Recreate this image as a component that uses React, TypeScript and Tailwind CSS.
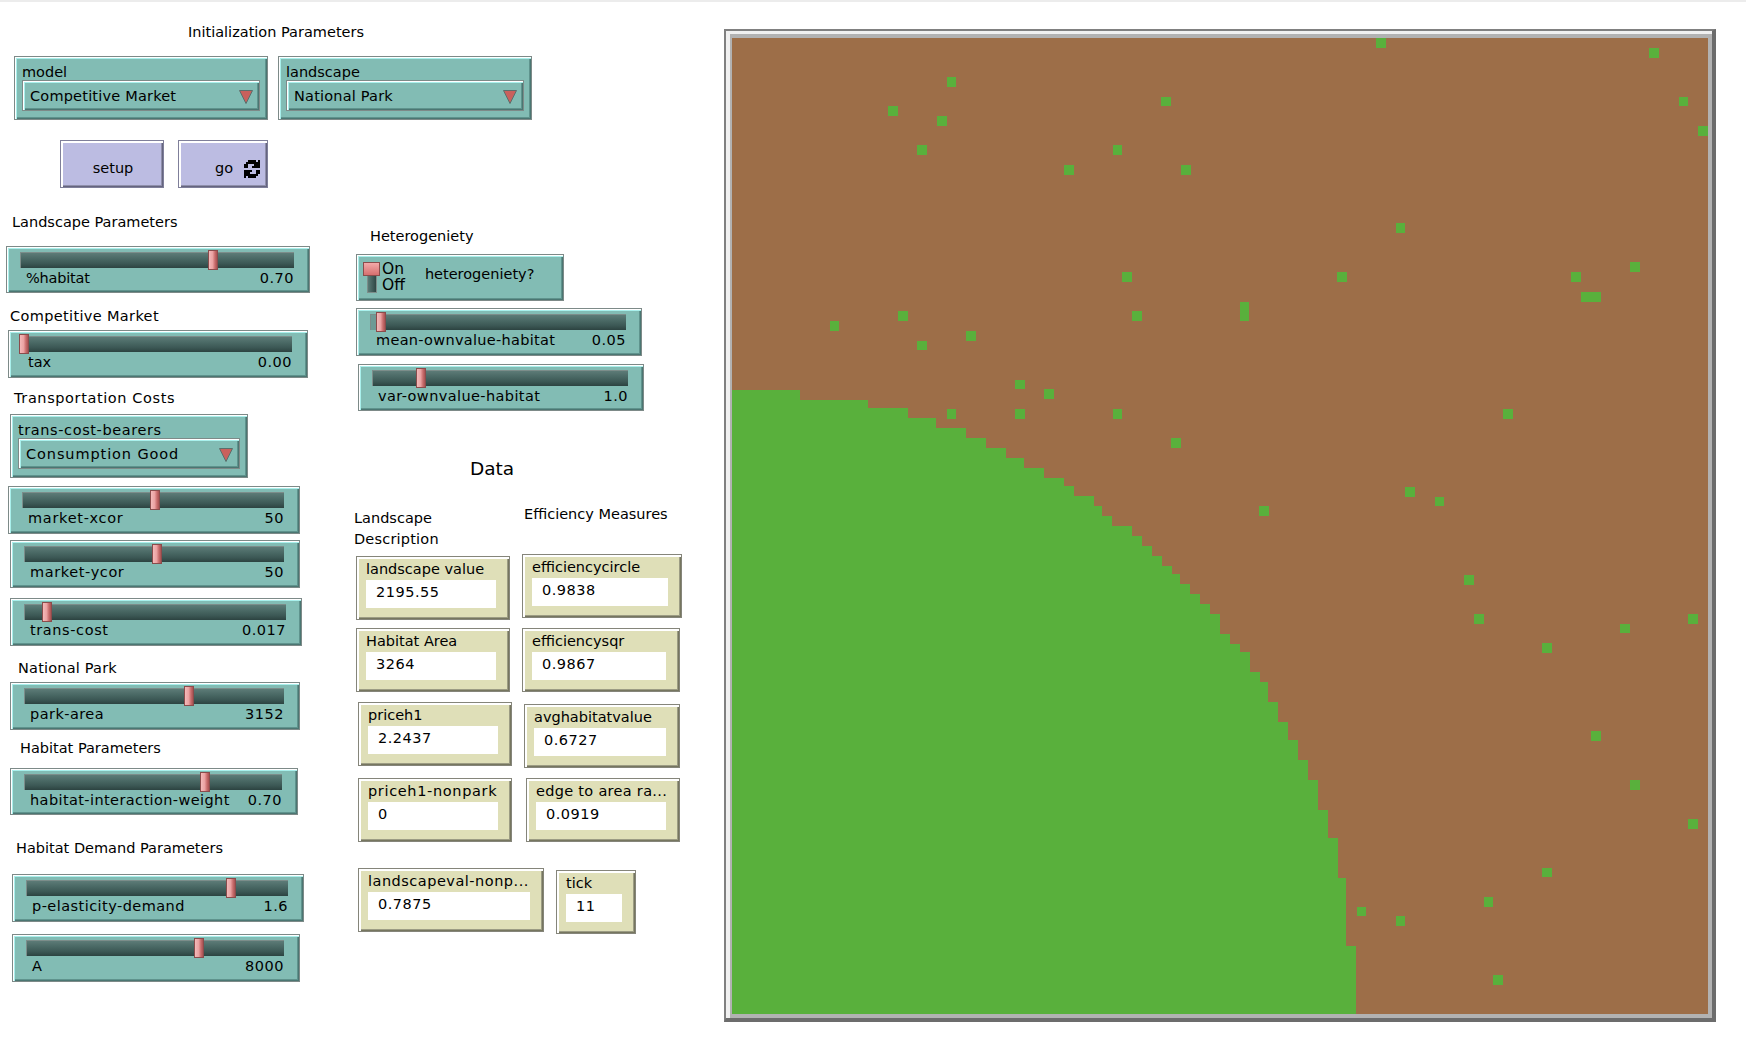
import React from "react";

const steps: [number, number][] = [
  [800,400],[868,408],[908,418],[936,428],[966,438],[986,448],[1006,458],[1024,468],[1044,478],[1064,486],
  [1074,496],[1094,506],[1102,516],[1112,526],[1132,536],[1142,546],[1152,556],[1162,566],[1172,574],[1180,584],
  [1190,594],[1200,604],[1210,614],[1220,634],[1230,644],[1240,652],[1250,672],[1260,682],[1268,702],[1278,722],
  [1288,740],[1298,760],[1308,780],[1318,810],[1328,838],[1338,878],[1346,946],[1356,1014],
];

const dots: [number, number, number?, number?][] = [
  [66,0],[94,1],[22,4],[44,6],[97,6],[16,7],[21,8],[99,9],[19,11],[39,11],[34,13],[46,13],[68,19],[40,24],[62,24],
  [86,24],[92,23],[87,26,2,1],[52,27,1,2],[17,28],[41,28],[10,29],[24,30],[19,31],[29,35],[32,36],[22,38],[29,38],
  [39,38],[79,38],[45,41],[54,48],[69,46],[72,47],[75,55],[76,59],[83,62],[91,60],[98,59],[88,71],[92,76],[98,80],
  [83,85],[77,88],[64,89],[68,90],[78,96],
];

function greenPoints() {
  const pts: string[] = ["732,390"];
  steps.forEach(([x, y]) => {
    pts.push(`${x},${pts[pts.length - 1].split(",")[1]}`);
    pts.push(`${x},${y}`);
  });
  pts.push("732,1014");
  return pts.join(" ");
}

function px(v: number) {
  return Math.round(v * 9.76);
}

function World() {
  return (
    <div className="absolute left-[724px] top-[29px] box-border w-[992px] h-[993px] border-t-2 border-l-2 border-r-4 border-b-4 border-t-[#808080] border-l-[#808080] border-r-[#6c6c6c] border-b-[#6c6c6c] bg-[#b2b2b2] pt-[7px] pl-[6px] pr-[4px] pb-[4px] shadow-[inset_4px_3px_0_#f0f0f0]">
      <svg width="976" height="976" viewBox="732 38 976 976" shapeRendering="crispEdges" className="block">
        <rect x="732" y="38" width="976" height="976" fill="#9d6e48" />
        <polygon points={greenPoints()} fill="#59b03c" />
        {dots.map(([c, r, w = 1, h = 1], i) => (
          <rect
            key={i}
            x={732 + px(c)}
            y={38 + px(r)}
            width={px(c + w) - px(c)}
            height={px(r + h) - px(r)}
            fill="#59b03c"
          />
        ))}
      </svg>
    </div>
  );
}

const tealBevel =
  "border border-[#7d8a88] bg-[#82bcb4] shadow-[inset_1px_1px_0_#ffffff,inset_2px_2px_0_#a9f0ec,inset_-1px_-1px_0_#4b7672,inset_-2px_-2px_0_#5f938d]";

function Slider({
  pos,
  handle,
  label,
  value,
  filled,
  track = "",
}: {
  pos: string;
  handle: string;
  label: string;
  value: string;
  filled?: string;
  track?: string;
}) {
  return (
    <div className={`absolute box-border pl-[13px] pr-[15px] pt-[5px] text-[14.5px] ${tealBevel} ${pos}`}>
      <div className="relative h-[16px] border-l border-t border-[#7c8d8a] bg-[linear-gradient(#5d7b77_0,#4b6a66_35%,#3c5855_70%,#2c4341_100%)]">
        {filled ? <div className={`absolute left-0 top-0 h-full bg-[#6f9a95] ${filled}`} /> : null}
        <div
          className={`absolute -top-[3px] box-border w-[10px] h-[20px] border border-[#8a4c4c] bg-[linear-gradient(90deg,#f3b9b9_0,#eba2a2_45%,#c76b6b_75%,#a85252_100%)] ${handle}`}
        />
      </div>
      <div className="box-border flex h-[19px] items-center justify-between pl-[6px] pt-[2px] leading-[17px]">
        <span className={track}>{label}</span>
        <span className="tracking-[0.5px]">{value}</span>
      </div>
    </div>
  );
}

function Chooser({
  pos,
  label,
  value,
  track = "",
  labelTrack = "",
}: {
  pos: string;
  label: string;
  value: string;
  track?: string;
  labelTrack?: string;
}) {
  return (
    <div className={`absolute box-border pl-[7px] pr-[7px] pt-[3px] text-[14.5px] ${tealBevel} ${pos}`}>
      <div className={`h-[20px] leading-[24px] ${labelTrack}`}>{label}</div>
      <div className="box-border flex h-[31px] items-center justify-between border border-[#7d8a88] pl-[7px] pr-[6px] pt-[2px] shadow-[inset_1px_1px_0_#ffffff,inset_2px_2px_0_#a9f0ec,inset_-1px_-1px_0_#4b7672,inset_-2px_-2px_0_#5f938d]">
        <span className={track}>{value}</span>
        <svg width="14" height="14" viewBox="0 0 14 14">
          <polygon points="0.5,0.5 13.5,0.5 7,13.5" fill="#c9605c" stroke="#5a6f6c" strokeWidth="1" />
        </svg>
      </div>
    </div>
  );
}

function ForeverIcon() {
  const rows = ["..####.#", ".#######", "##...###", "##..####", "........", "####..##", "###...##", "#######.", "#.####.."];
  return (
    <svg width="16" height="18" viewBox="0 0 8 9" shapeRendering="crispEdges" className="block">
      {rows.flatMap((row, y) =>
        row.split("").map((c, x) => (c === "#" ? <rect key={`${x}-${y}`} x={x} y={y} width="1" height="1" fill="#000" /> : null))
      )}
    </svg>
  );
}

const purpleBevel =
  "border border-[#7f7f9a] bg-[#bcbce2] shadow-[inset_2px_2px_0_#ffffff,inset_-1px_-1px_0_#65657f,inset_-2px_-2px_0_#8f8fab]";

function Monitor({ pos, label, value, track = "" }: { pos: string; label: string; value: string; track?: string }) {
  return (
    <div
      className={`absolute box-border pl-[9px] pr-[13px] pt-[2px] text-[14.5px] border border-[#85857a] bg-[#dfdfb8] shadow-[inset_2px_2px_0_#ffffff,inset_-1px_-1px_0_#76765f,inset_-2px_-2px_0_#9c9c84] ${pos}`}
    >
      <div className={`h-[20px] leading-[20px] whitespace-nowrap ${track}`}>{label}</div>
      <div className="mt-[1px] h-[28px] bg-white pl-[10px] leading-[24px] tracking-[0.5px]">{value}</div>
    </div>
  );
}

function Note({ pos, children }: { pos: string; children: React.ReactNode }) {
  return <div className={`absolute h-[20px] leading-[20px] text-[14.5px] whitespace-nowrap ${pos}`}>{children}</div>;
}

export default function App() {
  return (
    <div className="relative h-[1048px] w-[1746px] overflow-hidden bg-white font-['DejaVu_Sans',sans-serif] text-black">
      <div className="h-[2px] bg-[#ececec]" />

      <Note pos="left-[188px] top-[22px]">Initialization Parameters</Note>
      <Chooser pos="left-[14px] top-[56px] w-[254px] h-[64px]" label="model" value="Competitive Market" track="tracking-[0.2px]" />
      <Chooser pos="left-[278px] top-[56px] w-[254px] h-[64px]" label="landscape" value="National Park" track="tracking-[0.2px]" />

      <div className={`absolute left-[60px] top-[140px] box-border flex h-[48px] w-[104px] items-center justify-center pt-[9px] pl-[2px] text-[14.5px] ${purpleBevel}`}>
        setup
      </div>
      <div className={`absolute left-[178px] top-[140px] box-border flex h-[48px] w-[90px] items-center justify-end gap-[11px] pt-[9px] pr-[7px] text-[14.5px] ${purpleBevel}`}>
        <span>go</span>
        <ForeverIcon />
      </div>

      <Note pos="left-[12px] top-[212px]">Landscape Parameters</Note>
      <Slider pos="left-[6px] top-[246px] w-[304px] h-[47px]" handle="left-[187px]" label="%habitat" value="0.70" track="tracking-[-0.2px]" />

      <Note pos="left-[10px] top-[306px] tracking-[0.35px]">Competitive Market</Note>
      <Slider pos="left-[8px] top-[330px] w-[300px] h-[48px]" handle="left-[-4px]" label="tax" value="0.00" />

      <Note pos="left-[14px] top-[388px] tracking-[0.6px]">Transportation Costs</Note>
      <Chooser pos="left-[10px] top-[414px] w-[238px] h-[64px]" label="trans-cost-bearers" value="Consumption Good" track="tracking-[0.9px]" labelTrack="tracking-[0.6px]" />
      <Slider pos="left-[8px] top-[486px] w-[292px] h-[48px]" handle="left-[127px]" label="market-xcor" value="50" track="tracking-[0.7px]" />
      <Slider pos="left-[10px] top-[540px] w-[290px] h-[48px]" handle="left-[127px]" label="market-ycor" value="50" track="tracking-[0.6px]" />
      <Slider pos="left-[10px] top-[598px] w-[292px] h-[48px]" handle="left-[17px]" label="trans-cost" value="0.017" track="tracking-[0.6px]" />

      <Note pos="left-[18px] top-[658px] tracking-[0.2px]">National Park</Note>
      <Slider pos="left-[10px] top-[682px] w-[290px] h-[48px]" handle="left-[159px]" label="park-area" value="3152" track="tracking-[0.45px]" />

      <Note pos="left-[20px] top-[738px]">Habitat Parameters</Note>
      <Slider pos="left-[10px] top-[768px] w-[288px] h-[47px]" handle="left-[175px]" label="habitat-interaction-weight" value="0.70" track="tracking-[0.4px]" />

      <Note pos="left-[16px] top-[838px]">Habitat Demand Parameters</Note>
      <Slider pos="left-[12px] top-[874px] w-[292px] h-[48px]" handle="left-[199px]" label="p-elasticity-demand" value="1.6" track="tracking-[0.45px]" />
      <Slider pos="left-[12px] top-[934px] w-[288px] h-[48px]" handle="left-[167px]" label="A" value="8000" />

      <Note pos="left-[370px] top-[226px]">Heterogeniety</Note>
      <div className={`absolute left-[356px] top-[254px] box-border flex h-[47px] w-[208px] text-[14.5px] ${tealBevel}`}>
        <div className="relative ml-[6px] mt-[7px] w-[18px]">
          <div className="absolute left-[4px] top-[12px] h-[19px] w-[10px] border border-[#7c8d8a] bg-[linear-gradient(90deg,#5b7a76,#2f4745)]" />
          <div className="absolute left-0 top-0 h-[14px] w-[17px] border border-[#8a4c4c] bg-[linear-gradient(#f3a9a9,#d66f6f)]" />
        </div>
        <div className="ml-[1px] mt-[6px] text-[15.5px] leading-[16px]">
          <div>On</div>
          <div>Off</div>
        </div>
        <div className="ml-[20px] mt-[9px] leading-[20px]">heterogeniety?</div>
      </div>
      <Slider pos="left-[356px] top-[308px] w-[286px] h-[48px]" handle="left-[5px]" label="mean-ownvalue-habitat" value="0.05" filled="w-[10px]" track="tracking-[0.3px]" />
      <Slider pos="left-[358px] top-[364px] w-[286px] h-[47px]" handle="left-[43px]" label="var-ownvalue-habitat" value="1.0" track="tracking-[0.4px]" />

      <div className="absolute left-[470px] top-[457px] h-[24px] text-[18.5px] leading-[24px]">Data</div>
      <Note pos="left-[354px] top-[508px]">Landscape</Note>
      <Note pos="left-[354px] top-[529px] tracking-[0.2px]">Description</Note>
      <Note pos="left-[524px] top-[504px]">Efficiency Measures</Note>

      <Monitor pos="left-[356px] top-[556px] w-[154px] h-[64px]" label="landscape value" value="2195.55" />
      <Monitor pos="left-[522px] top-[554px] w-[160px] h-[64px]" label="efficiencycircle" value="0.9838" />
      <Monitor pos="left-[356px] top-[628px] w-[154px] h-[64px]" label="Habitat Area" value="3264" />
      <Monitor pos="left-[522px] top-[628px] w-[158px] h-[64px]" label="efficiencysqr" value="0.9867" />
      <Monitor pos="left-[358px] top-[702px] w-[154px] h-[64px]" label="priceh1" value="2.2437" />
      <Monitor pos="left-[524px] top-[704px] w-[156px] h-[64px]" label="avghabitatvalue" value="0.6727" />
      <Monitor pos="left-[358px] top-[778px] w-[154px] h-[64px]" label="priceh1-nonpark" value="0" track="tracking-[0.65px]" />
      <Monitor pos="left-[526px] top-[778px] w-[154px] h-[64px]" label="edge to area ra..." value="0.0919" track="tracking-[0.3px]" />
      <Monitor pos="left-[358px] top-[868px] w-[186px] h-[64px]" label="landscapeval-nonp..." value="0.7875" track="tracking-[0.5px]" />
      <Monitor pos="left-[556px] top-[870px] w-[80px] h-[64px]" label="tick" value="11" />

      <World />
    </div>
  );
}
